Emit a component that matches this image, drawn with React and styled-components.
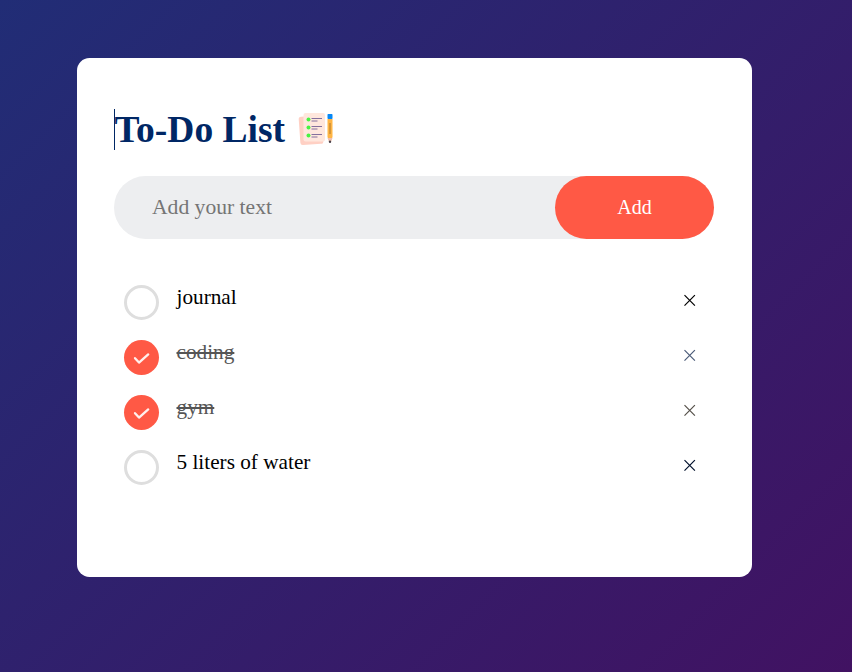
import React, { useState } from "react";
import styled, { createGlobalStyle } from "styled-components";

const GlobalStyle = createGlobalStyle`
  * { box-sizing: border-box; margin: 0; padding: 0; }
  body { font-family: "Liberation Serif", "Times New Roman", serif; }
`;

const Page = styled.main`
  height: 100vh;
  padding: 58px 100px 95px 77px;
  background: linear-gradient(135deg, #212d76, #411262);
`;

const Card = styled.section`
  width: 675px;
  height: 519px;
  padding: 51px 38px 0 37px;
  border-radius: 12.5px;
  background: #fff;
`;

const Title = styled.h1`
  display: flex;
  height: 41px;
  margin-bottom: 26px;
  border-left: 1px solid #002765;
  color: #002765;
  font-size: 37.5px;
  line-height: 41px;
  text-indent: -0.5px;
  svg { margin: 2px 0 0 13px; }
`;

const InputRow = styled.form`
  display: flex;
  height: 63px;
  margin-bottom: 36px;
  border-radius: 32px;
  background: #edeef0;
`;

const TaskInput = styled.input`
  flex: 1;
  min-width: 0;
  padding: 0 0 0 38px;
  border: 0;
  outline: 0;
  background: transparent;
  color: #000;
  font: 21.6px "Liberation Serif", "Times New Roman", serif;
  &::placeholder { color: #757575; opacity: 1; }
`;

const AddButton = styled.button`
  width: 159px;
  border: 0;
  border-radius: 32px;
  background: #ff5945;
  color: #fff;
  font: 20px "Liberation Serif", "Times New Roman", serif;
  cursor: pointer;
`;

const List = styled.ul`
  list-style: none;
`;

const Item = styled.li`
  display: flex;
  height: 55px;
  padding: 10px 0 0 10px;
  font-size: 21.25px;
  line-height: 24px;
  color: ${(p) => (p.$done ? "#555" : "#000")};
  cursor: pointer;
`;

const Check = styled.span`
  display: grid;
  place-items: center;
  width: 35px;
  height: 35px;
  margin-right: 17.5px;
  border: ${(p) => (p.$done ? "0" : "3px solid #dedede")};
  border-radius: 50%;
  background: ${(p) => (p.$done ? "#ff5945" : "#fff")};
`;

const Label = styled.span`
  flex: 1;
  text-decoration: ${(p) => (p.$done ? "line-through 2px" : "none")};
`;

const Remove = styled.button`
  width: 50px;
  height: 30px;
  border: 0;
  background: none;
  color: inherit;
  line-height: 0;
`;

function NotesIcon() {
  return (
    <svg width="37" height="36" viewBox="0 0 37 36">
      <rect x="1.5" y="5" width="23" height="28.5" rx="2.5" fill="#ffd0c4" transform="rotate(-4 13 19)" />
      <rect x="5.5" y="2" width="21.5" height="28.5" rx="2" fill="#ffe7dd" />
      {[8.5, 16.5, 24.5].map((y) => (
        <g key={y}>
          <circle cx="10.5" cy={y} r="2" fill="#48f442" />
          <path d={`M13.5 ${y - 1}h10.5M13.5 ${y + 1.5}h6`} stroke="#84709d" strokeWidth="1" />
        </g>
      ))}
      <path d="M29.5 8h5v18l-1.6 4h-1.8L29.5 26z" fill="#ffb545" />
      <rect x="29.5" y="3" width="5" height="5" rx=".7" fill="#0788f5" />
      <path d="M32 12v11" stroke="#ad792d" strokeWidth="1" />
      <path d="M29.5 27h5l-1.7 4h-1.6z" fill="#efc0b2" />
      <circle cx="32" cy="30.8" r="1.2" fill="#4a4148" />
    </svg>
  );
}

const initialTasks = [
  { id: 1, text: "journal", done: false, mark: "#000" },
  { id: 2, text: "coding", done: true, mark: "#4b5b78" },
  { id: 3, text: "gym", done: true, mark: "#555049" },
  { id: 4, text: "5 liters of water", done: false, mark: "#00102c" },
];

export default function App() {
  const [tasks, setTasks] = useState(initialTasks);
  const [text, setText] = useState("");

  const add = (e) => {
    e.preventDefault();
    if (!text.trim()) return;
    setTasks([...tasks, { id: Date.now(), text, done: false, mark: "#000" }]);
    setText("");
  };
  const toggle = (id) =>
    setTasks(tasks.map((t) => (t.id === id ? { ...t, done: !t.done } : t)));
  const remove = (e, id) => {
    e.stopPropagation();
    setTasks(tasks.filter((t) => t.id !== id));
  };

  return (
    <>
      <GlobalStyle />
      <Page>
        <Card>
          <Title>To-Do List <NotesIcon /></Title>
          <InputRow onSubmit={add}>
            <TaskInput placeholder="Add your text" value={text} onChange={(e) => setText(e.target.value)} />
            <AddButton>Add</AddButton>
          </InputRow>
          <List>
            {tasks.map((t) => (
              <Item key={t.id} $done={t.done} onClick={() => toggle(t.id)}>
                <Check $done={t.done}>
                  {t.done && (
                    <svg width="35" height="35" viewBox="0 0 35 35" fill="none" stroke="#fff0ed" strokeWidth="2.3" strokeLinecap="round" strokeLinejoin="round">
                      <path d="M11 18.2l4 4.4 9.2-8.2" />
                    </svg>
                  )}
                </Check>
                <Label $done={t.done}>{t.text}</Label>
                <Remove aria-label="Remove" onClick={(e) => remove(e, t.id)}>
                  <svg width="13" height="14" viewBox="0 0 13 14" stroke={t.mark} strokeWidth="1.2">
                    <path d="M1.5 2.2l10.4 10.4M11.9 2.2L1.5 12.6" />
                  </svg>
                </Remove>
              </Item>
            ))}
          </List>
        </Card>
      </Page>
    </>
  );
}
